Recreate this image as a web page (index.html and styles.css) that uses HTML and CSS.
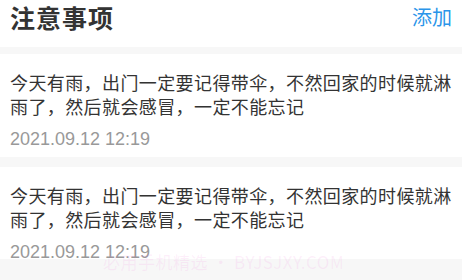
FILE: index.html
```html
<!DOCTYPE html>
<html lang="zh-CN">
<head>
<meta charset="utf-8">
<link rel="stylesheet" href="styles.css">
</head>
<body>
<div class="page">
  <header class="header">
    <h1 class="title">注意事项</h1>
    <span class="add">添加</span>
  </header>
  <main class="list">
    <section class="card">
      <p class="text">今天有雨，出门一定要记得带伞，不然回家的时候就淋雨了，然后就会感冒，一定不能忘记</p>
      <div class="date">2021.09.12 12:19</div>
    </section>
    <section class="card">
      <p class="text">今天有雨，出门一定要记得带伞，不然回家的时候就淋雨了，然后就会感冒，一定不能忘记</p>
      <div class="date">2021.09.12 12:19</div>
    </section>
  </main>
  <div class="watermark">必用手机精选 • BYJSJXY.COM</div>
</div>
</body>
</html>
```

FILE: styles.css
```css
* { box-sizing: border-box; }
html, body {
  margin: 0;
  padding: 0;
  background: #f7f7f7;
  font-family: "Noto Sans CJK SC", "Noto Sans", sans-serif;
}
.page {
  position: relative;
  width: 462px;
  height: 280px;
  overflow: hidden;
  background: #f7f7f7;
  display: flex;
  flex-direction: column;
}
.header {
  flex: none;
  height: 47px;
  background: #fff;
  display: flex;
  justify-content: space-between;
  align-items: flex-start;
  padding: 0 10px;
}
.title {
  margin: 0;
  font-size: 25px;
  font-weight: 700;
  color: #333;
  line-height: 34px;
  letter-spacing: 1px;
}
.add {
  font-size: 20px;
  color: #2b95e9;
  line-height: 34px;
}
.list {
  flex: none;
  height: 212px;
  overflow: hidden;
  display: flex;
  flex-direction: column;
  gap: 10px;
  padding-top: 7px;
}
.card {
  flex: none;
  background: #fff;
  padding: 16px 10px 8px 10px;
}
.text {
  margin: 0;
  font-size: 18px;
  line-height: 24px;
  letter-spacing: 0.4px;
  color: #333;
}
.date {
  margin-top: 11px;
  font-family: "Liberation Sans", Arial, sans-serif;
  font-size: 18px;
  line-height: 20px;
  color: #999;
}
.watermark {
  position: absolute;
  left: 103px;
  top: 249px;
  font-size: 17px;
  color: rgba(240, 120, 220, 0.12);
  letter-spacing: 0.5px;
}
```
